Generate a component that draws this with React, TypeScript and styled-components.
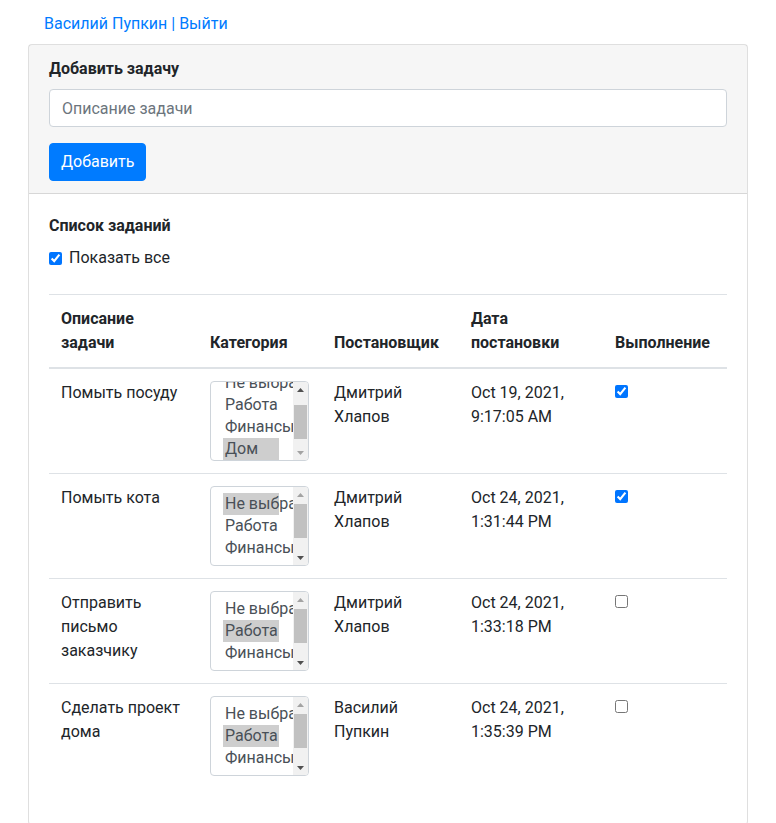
import React from "react";
import styled, { createGlobalStyle } from "styled-components";

const GlobalStyle = createGlobalStyle`
  html, body {
    margin: 0;
    padding: 0;
    background: #fff;
  }
  body {
    font-family: Roboto, "Noto Sans", "Liberation Sans", sans-serif;
    font-size: 16px;
    line-height: 1.5;
    color: #212529;
  }
  * { box-sizing: border-box; }
`;

const Page = styled.div`
  padding: 12px 28px 0 28px;
`;

const UserBar = styled.div`
  padding-left: 16px;
  margin-bottom: 8px;
  color: #007bff;
`;

const UserLink = styled.a`
  color: #007bff;
  text-decoration: none;
`;

const Card = styled.div`
  border: 1px solid rgba(0, 0, 0, 0.125);
  border-radius: 4px;
  background: #fff;
`;

const CardHeader = styled.div`
  background: rgba(0, 0, 0, 0.035);
  padding: 12px 20px 12px 20px;
  border-bottom: 1px solid rgba(0, 0, 0, 0.125);
`;

const CardBody = styled.div`
  padding: 20px;
`;

const Title = styled.div`
  font-weight: 700;
  margin-bottom: 8px;
`;

const TextInput = styled.input`
  display: block;
  width: 100%;
  height: 38px;
  padding: 6px 12px;
  font: inherit;
  color: #495057;
  background: #fff;
  border: 1px solid #ced4da;
  border-radius: 4px;
  margin: 0 0 16px 0;
  &::placeholder {
    color: #6c757d;
  }
`;

const PrimaryButton = styled.button`
  display: inline-block;
  font: inherit;
  line-height: 1.5;
  color: #fff;
  background: #007bff;
  border: 1px solid #007bff;
  border-radius: 4px;
  padding: 6px 11px;
  cursor: pointer;
`;

const CheckRow = styled.label`
  display: flex;
  align-items: center;
  gap: 7px;
  margin-bottom: 24px;
`;

const Check = styled.input.attrs({ type: "checkbox" })`
  width: 13px;
  height: 13px;
  margin: 0;
  accent-color: #0075ff;
`;

const CellCheck = styled(Check)`
  display: block;
  margin-top: 4px;
`;

const Table = styled.table`
  width: 100%;
  border-collapse: collapse;
  table-layout: fixed;
  margin-bottom: 16px;
`;

const Th = styled.th`
  text-align: left;
  font-weight: 700;
  padding: 12px;
  vertical-align: bottom;
  border-top: 1px solid #dee2e6;
  border-bottom: 2px solid #dee2e6;
`;

const Td = styled.td`
  padding: 12px;
  vertical-align: top;
  border-top: 1px solid #dee2e6;
`;

const ListBox = styled.div`
  display: flex;
  width: 99px;
  height: 80px;
  border: 1px solid #ced4da;
  border-radius: 4px;
  overflow: hidden;
  background: #fff;
`;

const ListArea = styled.div<{ $clip: boolean }>`
  flex: 1;
  min-width: 0;
  overflow: hidden;
  padding: 6px 0 0 12px;
  clip-path: ${(p) => (p.$clip ? "inset(0 0 4px 0)" : "none")};
`;

const OptionList = styled.div<{ $offset: number }>`
  margin-top: ${(p) => -p.$offset}px;
`;

const Option = styled.div<{ $selected: boolean }>`
  width: 56px;
  height: 22px;
  line-height: 22px;
  padding-left: 2px;
  white-space: nowrap;
  color: #495057;
  background: ${(p) => (p.$selected ? "#cecece" : "transparent")};
`;

const ScrollBar = styled.div`
  width: 15px;
  flex: none;
  display: flex;
  flex-direction: column;
  background: #f1f1f1;
`;

const ArrowButton = styled.div`
  height: 15px;
  flex: none;
  display: flex;
  align-items: center;
  justify-content: center;
`;

const Track = styled.div<{ $thumbTop: number }>`
  flex: 1;
  padding: ${(p) => p.$thumbTop}px 1px 0 1px;
`;

const Thumb = styled.div`
  height: 34px;
  background: #c1c1c1;
`;

const Arrow: React.FC<{ up: boolean; active: boolean }> = ({ up, active }) => (
  <svg width="7" height="4" viewBox="0 0 7 4">
    <polygon
      points={up ? "3.5,0 7,4 0,4" : "0,0 7,0 3.5,4"}
      fill={active ? "#505050" : "#a3a3a3"}
    />
  </svg>
);

const OPTIONS = ["Не выбрано", "Работа", "Финансы", "Дом"];

const CategorySelect: React.FC<{ value: string; offset: number }> = ({ value, offset }) => {
  const atTop = offset === 0;
  return (
    <ListBox>
      <ListArea $clip={atTop}>
        <OptionList $offset={offset}>
          {OPTIONS.map((o) => (
            <Option key={o} $selected={o === value}>
              {o}
            </Option>
          ))}
        </OptionList>
      </ListArea>
      <ScrollBar>
        <ArrowButton>
          <Arrow up active={!atTop} />
        </ArrowButton>
        <Track $thumbTop={atTop ? 2 : 8}>
          <Thumb />
        </Track>
        <ArrowButton>
          <Arrow up={false} active={atTop} />
        </ArrowButton>
      </ScrollBar>
    </ListBox>
  );
};

type Task = {
  text: string;
  category: string;
  offset: number;
  author: string;
  date: string;
  done: boolean;
};

const TASKS: Task[] = [
  {
    text: "Помыть посуду",
    category: "Дом",
    offset: 16,
    author: "Дмитрий Хлапов",
    date: "Oct 19, 2021, 9:17:05 AM",
    done: true,
  },
  {
    text: "Помыть кота",
    category: "Не выбрано",
    offset: 0,
    author: "Дмитрий Хлапов",
    date: "Oct 24, 2021, 1:31:44 PM",
    done: true,
  },
  {
    text: "Отправить письмо заказчику",
    category: "Работа",
    offset: 0,
    author: "Дмитрий Хлапов",
    date: "Oct 24, 2021, 1:33:18 PM",
    done: false,
  },
  {
    text: "Сделать проект дома",
    category: "Работа",
    offset: 0,
    author: "Василий Пупкин",
    date: "Oct 24, 2021, 1:35:39 PM",
    done: false,
  },
];

export default function App() {
  return (
    <>
      <GlobalStyle />
      <Page>
        <UserBar>
          <UserLink href="#">Василий Пупкин</UserLink> | <UserLink href="#">Выйти</UserLink>
        </UserBar>
        <Card>
          <CardHeader>
            <Title>Добавить задачу</Title>
            <TextInput placeholder="Описание задачи" />
            <PrimaryButton>Добавить</PrimaryButton>
          </CardHeader>
          <CardBody>
            <Title>Список заданий</Title>
            <CheckRow>
              <Check defaultChecked />
              Показать все
            </CheckRow>
            <Table>
              <colgroup>
                <col style={{ width: 149 }} />
                <col style={{ width: 124 }} />
                <col style={{ width: 137 }} />
                <col style={{ width: 144 }} />
                <col style={{ width: 124 }} />
              </colgroup>
              <thead>
                <tr>
                  <Th>Описание задачи</Th>
                  <Th>Категория</Th>
                  <Th>Постановщик</Th>
                  <Th>Дата постановки</Th>
                  <Th>Выполнение</Th>
                </tr>
              </thead>
              <tbody>
                {TASKS.map((t) => (
                  <tr key={t.text}>
                    <Td>{t.text}</Td>
                    <Td>
                      <CategorySelect value={t.category} offset={t.offset} />
                    </Td>
                    <Td>{t.author}</Td>
                    <Td>{t.date}</Td>
                    <Td>
                      <CellCheck defaultChecked={t.done} />
                    </Td>
                  </tr>
                ))}
              </tbody>
            </Table>
          </CardBody>
        </Card>
      </Page>
    </>
  );
}
